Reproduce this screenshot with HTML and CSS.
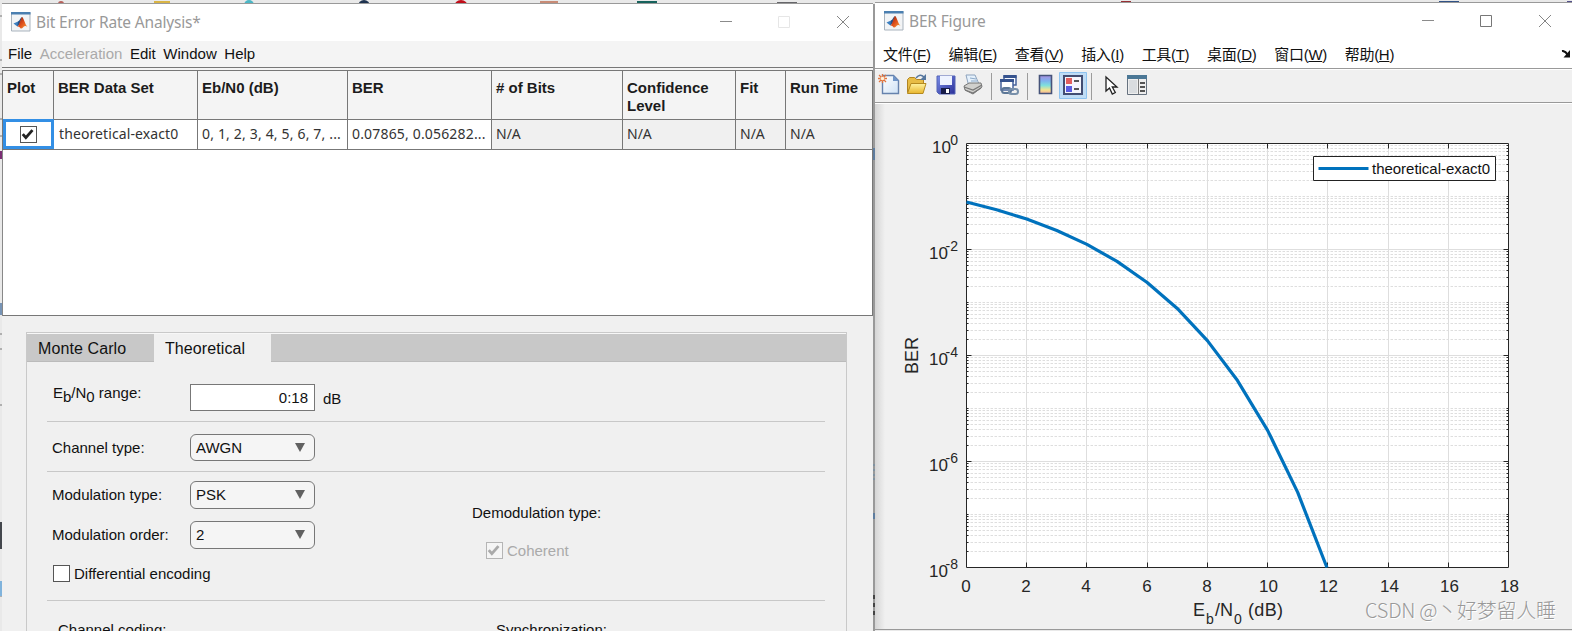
FILE: index.html
```html
<!DOCTYPE html>
<html lang="zh">
<head>
<meta charset="utf-8">
<title>Bit Error Rate Analysis</title>
<link rel="stylesheet" href="styles.css">
</head>
<body>
<svg width="0" height="0" class="defs" aria-hidden="true">
  <defs>
    <linearGradient id="bar" x1="0" y1="0" x2="0" y2="1"><stop offset="0" stop-color="#a98fe0"/><stop offset=".3" stop-color="#7fb2ee"/><stop offset=".55" stop-color="#80e0dc"/><stop offset=".8" stop-color="#f3e48f"/><stop offset="1" stop-color="#f4b09a"/></linearGradient>
    <linearGradient id="flame" x1="0" y1="0" x2="1" y2="1"><stop offset="0" stop-color="#7a1c10"/><stop offset=".5" stop-color="#dd4c1a"/><stop offset="1" stop-color="#f9a03c"/></linearGradient>
    <linearGradient id="paper" x1="0" y1="0" x2="1" y2="1"><stop offset="0" stop-color="#fff"/><stop offset="1" stop-color="#cfe2f6"/></linearGradient>
    <linearGradient id="gold" x1="0" y1="0" x2="0" y2="1"><stop offset="0" stop-color="#fff3a0"/><stop offset="1" stop-color="#e8b52c"/></linearGradient>
    <linearGradient id="disk" x1="0" y1="0" x2="1" y2="1"><stop offset="0" stop-color="#7a8ee8"/><stop offset="1" stop-color="#2a2f98"/></linearGradient>
    <symbol id="matlab" viewBox="0 0 20 20">
      <path d="M.5.5h18.500v18.500H.5z" fill="#f2f4f6" stroke="#a9b3bd"/><path d="M0 0h19.500v2.500H0z" fill="#4a7fb0"/>
      <path d="M2.500 11.500 7 9.500l2 1.800-2.700 3.200z" fill="#3b7fc0"/><path d="M7 9.500C9 8.500 9.500 5.500 11 5l-2 6.300-2.700 3.200z" fill="#254f86"/>
      <path d="M11 5c1.500 0 3 7.500 5.500 10-2-1.500-3-1-4.500.5-1 1-2 1.500-2.800.5-.7-1-1.500-1.500-2.900-1.500C9 13 9.500 6 11 5z" fill="url(#flame)"/>
    </symbol>
    <symbol id="check" viewBox="0 0 17 17"><path d="M2 8l3.500 4L13 3.500" fill="none" stroke="currentColor" stroke-width="3.200"/></symbol>
  </defs>
</svg>

<svg class="desktop" viewBox="0 0 1572 631" aria-hidden="true">
  <path d="M0 0h1572v631H0z" fill="#e9e9e9"/>
  <path d="M154 1h16v3h-16z" fill="#d9b445"/><circle cx="61" cy="4" r="3" fill="#b7615c"/><circle cx="249" cy="5" r="5" fill="#4bb7c6"/><circle cx="364" cy="6" r="6" fill="#1e3350"/><circle cx="461" cy="7" r="7" fill="#c10d19"/>
  <path d="M540 1h18v3h-18z" fill="#c88b76"/><path d="M637 1h20v3h-20z" fill="#16625c"/><path d="M777 2h20v2h-20z" fill="#66666a"/><path d="M1121 1h10v2h-10z" fill="#983034"/><path d="M1439 1h20v2h-20z" fill="#315286"/><path d="M1314 2h6v1h-6z" fill="#d67b3a"/><path d="M1567 1h5v2h-5z" fill="#53508c"/><path d="M963 2h8v1h-8z" fill="#777"/>
  <path d="M0 16h2M0 60h2M0 74h2M0 119h2M0 136h2M0 334h2M0 349h2M0 405h2M0 596h2" stroke="#777"/>
  <path d="M0 151h2v8h-2z" fill="#7b2e74"/><path d="M0 303h2v12h-2z" fill="#7794b6"/><path d="M0 522h2v27h-2z" fill="#44474d"/><path d="M0 581h2v15h-2z" fill="#80b3dc"/>
  <path d="M872 4h3v627h-3z" fill="#999"/><path d="M872 465h3M872 470h3M872 475h3M872 479h3" stroke="#688ca8"/><path d="M873 513h2v6h-2zM872 148h3v12h-3z" fill="#5d7c9e"/><path d="M872 595h3v4h-3zM872 603h3v4h-3zM872 611h3v4h-3z" fill="#444"/>
</svg>

<main class="screen">
  <section class="window analysis">
    <header class="titlebar">
      <svg class="app-icon"><use href="#matlab"/></svg>
      <h1 class="title">Bit Error Rate Analysis*</h1>
      <svg class="controls" viewBox="0 0 132 16"><path d="M2 7.500h12" stroke="#8b8b8b"/><path d="M60.500 2.500h11v11h-11z" fill="none" stroke="#e6e6e6"/><path d="M119 2l12 12M131 2l-12 12" stroke="#858585"/></svg>
    </header>
    <nav class="menu"><span>File</span><span class="off">Acceleration</span><span>Edit</span><span>Window</span><span>Help</span></nav>
    <div class="table-box">
      <table class="table">
        <colgroup><col class="c1"><col class="c2"><col class="c3"><col class="c4"><col class="c5"><col class="c6"><col class="c7"><col class="c8"></colgroup>
        <tr class="head"><th>Plot</th><th>BER Data Set</th><th>Eb/N0 (dB)</th><th>BER</th><th># of Bits</th><th>Confidence Level</th><th>Fit</th><th>Run Time</th></tr>
        <tr class="row"><td class="selected"><svg class="box"><use href="#check"/></svg></td><td class="name">theoretical-exact0</td><td class="snr">0, 1, 2, 3, 4, 5, 6, 7, ...</td><td class="ber">0.07865, 0.056282...</td><td class="na">N/A</td><td class="na">N/A</td><td class="na">N/A</td><td class="na">N/A</td></tr>
      </table>
    </div>
    <div class="panel">
      <div class="tabs"><div class="tab">Monte Carlo</div><div class="tab active">Theoretical</div></div>
      <div class="form">
        <div class="group range"><span class="label eb">E<sub>b</sub>/N<sub>0</sub> range:</span><span class="input">0:18</span><span class="unit">dB</span></div>
        <div class="group channel"><span class="label">Channel type:</span><span class="select">AWGN<i class="arrow"></i></span></div>
        <div class="group modulation">
          <div class="left">
            <div class="line"><span class="label">Modulation type:</span><span class="select">PSK<i class="arrow"></i></span></div>
            <div class="line"><span class="label">Modulation order:</span><span class="select">2<i class="arrow"></i></span></div>
            <div class="option"><span class="box"></span>Differential encoding</div>
          </div>
          <div class="right">
            <div class="heading">Demodulation type:</div>
            <div class="option off"><svg class="box"><use href="#check"/></svg>Coherent</div>
          </div>
        </div>
        <div class="coding"><span class="code-label">Channel coding:</span><span>Synchronization:</span></div>
      </div>
    </div>
  </section>

  <section class="window figure">
    <header class="titlebar">
      <svg class="app-icon"><use href="#matlab"/></svg>
      <h1 class="title">BER Figure</h1>
      <svg class="controls" viewBox="0 0 132 16"><path d="M2 7.500h12" stroke="#8b8b8b"/><path d="M60.500 2.500h11v11h-11z" fill="none" stroke="#777"/><path d="M119 2l12 12M131 2l-12 12" stroke="#858585"/></svg>
    </header>
    <nav class="menu-cn">
      <span>文件(<u>F</u>)</span><span>编辑(<u>E</u>)</span><span>查看(<u>V</u>)</span><span>插入(<u>I</u>)</span><span>工具(<u>T</u>)</span><span>桌面(<u>D</u>)</span><span>窗口(<u>W</u>)</span><span>帮助(<u>H</u>)</span>
      <svg class="dock" viewBox="0 0 10 8"><path d="M1 1q3-.5 6 4" fill="none" stroke="#111" stroke-width="2"/><path d="M9 0v7.500H2.500z" fill="#111"/></svg>
    </nav>
    <div class="toolbar">
      <svg viewBox="0 0 284 32" width="284" height="32">
        <g><path d="M7.500 5.500h11l5 5v13h-16z" fill="url(#paper)" stroke="#6682ad" stroke-width="1.400"/><path d="M18 5.500v5.500h6z" fill="#6f94c7"/><path d="M4 5l7 7M4 12l7-7M7.500 4v9M3 8.500h9" stroke="#e2753e" stroke-width="1.300"/><circle cx="7.500" cy="8.500" r="1.800" fill="#fff0d8"/></g>
        <g><path d="M32.500 22.500v-13l2-2h5l2 2h7v5H37z" fill="#e7bc45" stroke="#b18423"/><path d="M32.500 23.500l3.500-10h15l-3 10z" fill="url(#gold)" stroke="#b58a20"/><path d="M41 8q4-5 8-1" fill="none" stroke="#56779f" stroke-width="1.500"/><path d="M51 4v6h-6z" fill="#56779f"/></g>
        <g><path d="M62 6h18v18H64l-2-2z" fill="url(#disk)" stroke="#5263b5"/><path d="M65 6h12v9H65z" fill="#eef3ff"/><path d="M66 18h9v6h-9z" fill="#171c48"/><path d="M71 19h3v4h-3z" fill="#fff"/></g>
        <g><path d="M91 5l9 0 4 9-10 3z" fill="#e5f1fc" stroke="#8da3bd"/><path d="M89 16l5-3 12 0 1 4-9 7-8-4z" fill="#d0d0cd" stroke="#777"/><path d="M89 17l9 3 9-5M90 20l8 3 8-5" fill="none" stroke="#777" stroke-width="1.300"/><path d="M95 8l6 1M96 11l6 0" stroke="#8ca9c8"/></g>
        <path d="M116.500 3v27" stroke="#9c9c9c"/>
        <g><path d="M129 6h12v9h-12z" fill="#f6f9ff" stroke="#45619b" stroke-width="1.500"/><path d="M128.500 5h13v3h-13z" fill="#36538e"/><path d="M126 10h12v10h-12z" fill="#fff" stroke="#45619b" stroke-width="1.500"/><path d="M125 9h14v3h-14z" fill="#36538e"/><rect x="127" y="18" width="9" height="5" rx="2.500" fill="none" stroke="#5c7797" stroke-width="2"/><rect x="134" y="19" width="9" height="5" rx="2.500" fill="none" stroke="#7890aa" stroke-width="2"/></g>
        <path d="M152.500 3v27" stroke="#9c9c9c"/>
        <path d="M164.500 5.500h12v18h-12z" fill="url(#bar)" stroke="#465379" stroke-width="1.600"/>
        <path d="M184.500 2.500h27v26h-27z" fill="#bfdcf5" stroke="#8ec3f0"/><path d="M189 6h18v18h-18z" fill="#f5f5fc" stroke="#424d72" stroke-width="2"/><path d="M191 8h6v6h-6z" fill="#e35f5e"/><path d="M191 16h6v6h-6z" fill="#5a5de0"/><path d="M199 11h5M199 19h5" stroke="#222" stroke-width="1.500"/>
        <path d="M216.500 3v27" stroke="#9c9c9c"/>
        <path d="M231 7v14l3.500-3 2.800 6 3-1.500-3-5.500h4.700z" fill="#fff" stroke="#222" stroke-width="1.300"/>
        <path d="M252.500 5.500h19v19h-19z" fill="#eee" stroke="#67727f"/><path d="M252 5h20v4h-20z" fill="#4b7795"/><path d="M254 10h8v13h-8z" fill="#d9dcdf"/><path d="M263.500 9v15" stroke="#777"/><path d="M265 13h5M265 17h5M265 21h5" stroke="#222" stroke-width="1.400"/>
      </svg>
    </div>
    <div class="canvas">
      <svg id="plot" class="plot" viewBox="875 104 697 524" role="img" aria-label="BER versus Eb/N0">
        <path d="M966 143h543v425H966z" fill="#fff"/>
        <g id="grid"></g>
        <path id="curve" fill="none" stroke="#0072bd" stroke-width="3.200" stroke-linejoin="round"/>
        <g id="axis-labels" class="tick"></g>
        <path d="M1313.500 156.500h182v24h-182z" fill="#fff" stroke="#222"/><path d="M1318.500 168.500h50" stroke="#0072bd" stroke-width="3"/>
        <text x="1372" y="174" class="legend" textLength="118">theoretical-exact0</text>
        <text class="axis" transform="translate(918 374) rotate(-90)" textLength="37">BER</text>
        <text class="axis" x="1193" y="616">E</text><text class="subscript" x="1206" y="624">b</text><text class="axis" x="1215" y="616">/N</text><text class="subscript" x="1234" y="624">0</text><text class="axis" x="1248" y="616" textLength="35">(dB)</text>
        <g class="mark"><text x="1366" y="619" textLength="191" fill="#fff">CSDN @丶好梦留人睡</text><text x="1365" y="618" textLength="191" fill="#999">CSDN @丶好梦留人睡</text></g>
      </svg>
    </div>
  </section>
</main>
<script src="plot.js"></script>
</body>
</html>
```
FILE: styles.css
```css
* { box-sizing: border-box; }
body { margin: 0; width: 1572px; height: 631px; overflow: hidden; font-family: "Liberation Sans", "Noto Sans CJK SC", sans-serif; color: #111; }
.defs, .desktop { position: absolute; top: 0; left: 0; }
.desktop { width: 1572px; height: 631px; z-index: -1; }
.screen { display: flex; align-items: flex-start; padding-left: 2px; height: 631px; overflow: hidden; }
.window { display: flex; flex-direction: column; overflow: hidden; }
.analysis { width: 871px; height: 628px; margin-top: 3px; border-top: 1px solid #999; background: #f0f0f0; }
.figure { width: 697px; height: 628px; margin: 2px 0 0 2px; border-top: 1px solid #999; border-bottom: 1px solid #999; background: #f0f0f0; }
.titlebar { display: flex; align-items: center; flex: none; height: 37px; background: #fff; padding: 0 23px 1px 9px; }
.figure .titlebar { height: 38px; padding: 0 20px 2px 9px; }
.app-icon { width: 20px; height: 20px; }
.title { margin: 0 auto 0 5px; font: 400 15.500px "Noto Sans", sans-serif; color: #999; white-space: nowrap; letter-spacing: -.17px; }
.controls { width: 132px; height: 16px; }
.menu { display: flex; flex: none; align-items: center; height: 27px; padding: 0 6px 2px; background: #f4f4f4; font-size: 15px; gap: 7.600px; }
.off { color: #aaa; }
.table-box { height: 246px; flex: none; width: 871px; background: #fff; border: 1px solid #777; border-left-color: #888; box-shadow: 0 -2px #f4f4f4, 0 -3px #777; margin-top: 2px; }
.table { table-layout: fixed; border-collapse: collapse; width: 870px; margin-left: -1px; }
.c1 { width: 51px; } .c2 { width: 144px; } .c3 { width: 150px; } .c4 { width: 144px; } .c5 { width: 131px; } .c6 { width: 113px; } .c7 { width: 50px; } .c8 { width: 87px; }
.table th, .table td { border: 1px solid #777; text-align: left; overflow: hidden; white-space: nowrap; }
.table th { height: 48px; border-top: 0; vertical-align: top; padding: 8px 4px 0; font-size: 15px; line-height: 18px; background: #f4f4f4; white-space: normal; color: #1c1c1c; }
.table td { height: 30px; padding: 0 4px; font: 14px/20px "Noto Sans", sans-serif; color: #333; }
.table td.selected { outline: 3px solid #338fe5; outline-offset: -3px; padding: 1px 0 0 17px; }
.table td.na { background: #f0f0f0; }
.table td.name { letter-spacing: .1px; padding-left: 5px; }
.table td.snr, .table td.ber { letter-spacing: .17px; }
.box { display: block; width: 17px; height: 17px; border: 1px solid #555; background: #fff; color: #222; flex: none; }
.panel { width: 821px; flex: 1; margin: 16px 0 0 24px; border: 1px solid #c9c9c9; border-bottom: 0; }
.tabs { display: flex; height: 29px; border-top: 1px solid #f7f7f7; border-bottom: 1px solid #bbb; background: #c8c8c8; }
.tab { width: 127px; height: 28px; line-height: 30px; padding-left: 11px; font-size: 16px; letter-spacing: .1px; }
.tab.active { width: 117px; background: #f0f0f0; }
.form { padding: 0 21px 0 20px; font-size: 15px; }
.group { display: flex; border-bottom: 1px solid #c8c8c8; }
.range, .channel { align-items: center; padding-left: 5px; }
.range { height: 60px; padding-top: 12px; }
.channel { height: 50px; padding-top: 2px; }
.label { width: 138px; flex: none; }
.eb { margin-top: -10px; padding-left: 1px; }
.eb sub { font-size: 15px; line-height: 0; vertical-align: -4px; }
.input { width: 125px; height: 27px; border: 1px solid #777; background: #fff; text-align: right; line-height: 26px; padding-right: 6px; }
.unit { margin: 2px 0 0 8px; }
.select { display: flex; justify-content: space-between; align-items: center; width: 125px; height: 27px; border: 1px solid #777; border-radius: 6px; background: #f5f5f5; padding: 0 9px 1px 5px; }
.arrow { border: 5px solid transparent; border-top: 9px solid #616161; border-bottom: 0; }
.modulation { height: 129px; padding: 9px 0 0 5px; }
.left { width: 420px; }
.line { display: flex; align-items: center; height: 28px; margin-bottom: 12px; }
.line .label { padding-bottom: 2px; }
.line .select { height: 28px; padding-bottom: 2px; }
.option { display: flex; align-items: center; gap: 4px; }
.left .option { padding: 4px 0 0 1px; }
.heading { margin-top: 23px; line-height: 18px; }
.right .option { margin: 20px 0 0 14px; }
.off .box { border-color: #b5b5b5; color: #aaa; background: #f5f5f5; }
.coding { display: flex; padding: 20px 0 0 11px; }
.code-label { width: 438px; }
.menu-cn { display: flex; flex: none; height: 28px; align-items: center; background: #fff; border-bottom: 1px solid #999; padding: 0 0 2px 8px; font-size: 15px; gap: 17.800px; white-space: nowrap; letter-spacing: -.3px; }
.menu-cn u { text-underline-offset: 1px; }
.dock { width: 10px; height: 8px; margin: 0 1px 0 auto; flex: none; }
.toolbar { height: 34px; flex: none; border-top: 1px solid #fff; border-bottom: 1px solid #999; }
.toolbar svg { display: block; }
.canvas { flex: 1; border-top: 1px solid #fff; background: linear-gradient(90deg, #d5d5d5, #f0f0f0 10px); }
.plot { width: 697px; height: 524px; display: block; }
.tick { font-size: 17px; fill: #262626; }
.axis { font-size: 18px; fill: #262626; }
.exponent, .subscript { font-size: 14px; fill: #262626; }
.legend { font-size: 15px; fill: #111; }
.mark { font: 20px "Noto Sans CJK SC", sans-serif; font-weight: 300; }
```
FILE: plot.js
```js
const NS = "http://www.w3.org/2000/svg";
const grid = document.getElementById("grid");
const labels = document.getElementById("axis-labels");
const left = 966.5, right = 1508.5, top_ = 143.5, bottom = 567.5, decade = 53;

function stroke(d, color, dash) {
  const p = document.createElementNS(NS, "path");
  p.setAttribute("d", d);
  p.setAttribute("stroke", color);
  p.setAttribute("fill", "none");
  if (dash) p.setAttribute("stroke-dasharray", dash);
  grid.appendChild(p);
}
function label(text, x, y, cls, anchor) {
  const t = document.createElementNS(NS, "text");
  t.textContent = text;
  t.setAttribute("x", x);
  t.setAttribute("y", y);
  t.setAttribute("text-anchor", anchor);
  if (cls) t.setAttribute("class", cls);
  labels.appendChild(t);
}

let minor = "", major = "", ticks = "";
for (let k = 0; k < 8; k++) {
  for (let m = 1; m < 10; m++) {
    const y = Math.round(top_ + decade * (k + 1 - Math.log10(m)) - 0.5) + 0.5;
    if (m === 1 && k === 7) continue;
    if (m === 1 && k % 2) {
      major += `M${left} ${y}H${right}`;
      ticks += `M${left} ${y}h5M${right} ${y}h-5`;
    } else {
      minor += `M${left} ${y}H${right}`;
      ticks += `M${left} ${y}h2M${right} ${y}h-2`;
    }
  }
}
for (let i = 0; i <= 9; i++) {
  const x = Math.floor(left + i * 60.22) + 0.5;
  if (i > 0 && i < 9) {
    major += `M${x} ${top_}V${bottom}`;
    ticks += `M${x} ${top_}v5M${x} ${bottom}v-5`;
  }
  label(i * 2, x - (i < 5 ? 0.5 : -1), 592, "", "middle");
}
for (let e = 0; e <= 8; e += 2) {
  const y = top_ + e * decade;
  label("10", e ? 948 : 951, y + 9, "", "end");
  label(e ? "-" + e : "0", 958, y + 1, "exponent", "end");
}
stroke(minor, "#dedede", "2.5 1.5");
stroke(major, "#dedede");
stroke(ticks, "#262626");
stroke(`M${left} ${top_}H${right}V${bottom}H${left}Z`, "#262626");

// Coherent BPSK over AWGN, Eb/N0 = 0..12 dB
const ber = [0.07865, 0.056282, 0.037506, 0.022878, 0.012501, 0.0059539, 0.0023883, 7.7267e-4, 1.9091e-4, 3.3627e-5, 3.8721e-6, 2.6131e-7];
const points = ber.map((v, i) => `${left + i * 30.11} ${top_ - Math.log10(v) * decade}`);
points.push(`${left + 11.97 * 30.11} ${bottom}`);
document.getElementById("curve").setAttribute("d", "M" + points.join("L"));
```
